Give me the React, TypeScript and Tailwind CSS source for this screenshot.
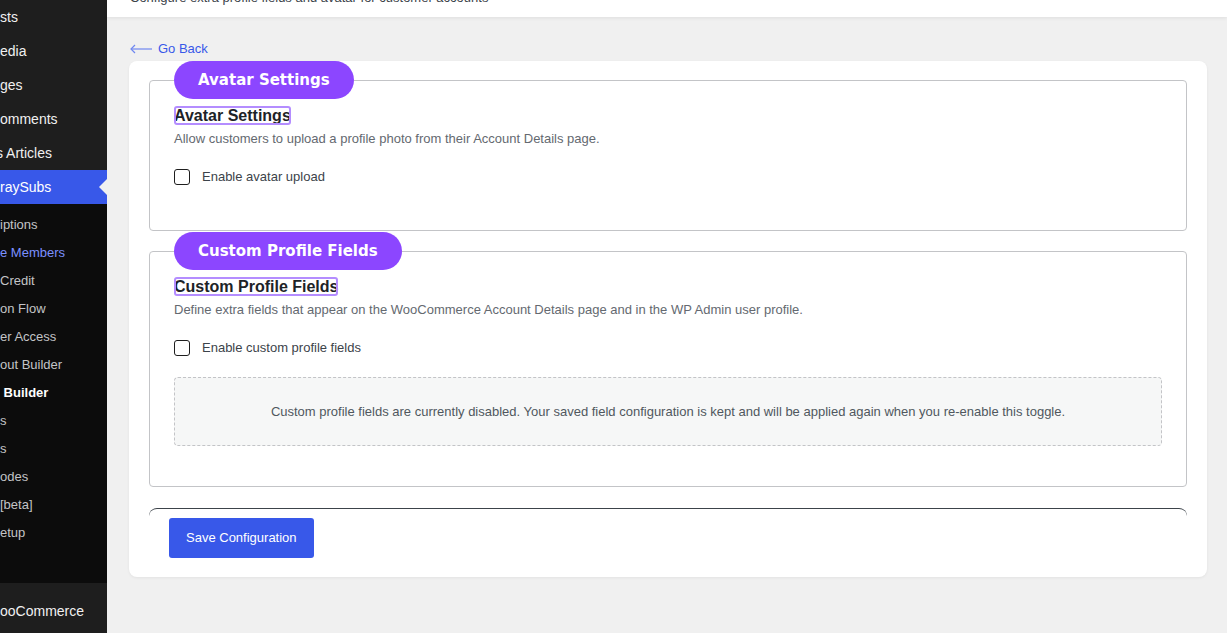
import React from 'react'

const topItems = [
  { label: 'sts' },
  { label: 'edia' },
  { label: 'ges' },
  { label: 'omments' },
  { label: 's Articles', cut: true },
  { label: 'raySubs', current: true },
]

const subItems = [
  { label: 'iptions' },
  { label: 'e Members', hover: true },
  { label: 'Credit' },
  { label: 'on Flow' },
  { label: 'er Access' },
  { label: 'out Builder' },
  { label: ' Builder', current: true },
  { label: 's' },
  { label: 's' },
  { label: 'odes' },
  { label: '[beta]' },
  { label: 'etup' },
]

function Sidebar() {
  return (
    <aside className="flex h-full w-[107px] shrink-0 flex-col overflow-hidden bg-[#1e1e1e] font-['Liberation_Sans',Arial,sans-serif]">
      {topItems.map((item) => (
        <div
          key={item.label}
          className={
            'relative flex h-[34px] items-center whitespace-pre text-[14px] ' +
            (item.current ? 'bg-[#3858e9] text-white' : 'text-[#f0f0f1]')
          }
        >
          <span className={item.cut ? '-ml-[4px]' : ''}>{item.label}</span>
          {item.current && (
            <span className="absolute right-0 top-[9px] h-0 w-0 border-y-[8px] border-r-[8px] border-y-transparent border-r-[#f0f0f0]" />
          )}
        </div>
      ))}
      <div className="flex h-[379px] flex-col bg-[#0c0c0c] pt-[7px]">
        {subItems.map((item, i) => (
          <div
            key={i}
            className={
              'flex h-[28px] items-center whitespace-pre text-[13px] ' +
              (item.current
                ? 'font-bold text-white'
                : item.hover
                  ? 'text-[#7b90ff]'
                  : 'text-[#c3c4c7]')
            }
          >
            {item.label}
          </div>
        ))}
      </div>
      <div className="pt-[11px]">
        <div className="flex h-[34px] items-center text-[14px] text-[#f0f0f1]">ooCommerce</div>
      </div>
    </aside>
  )
}

function Checkbox({ label }: { label: string }) {
  return (
    <label className="flex items-center gap-3 text-[13px] text-[#3c434a]">
      <input
        type="checkbox"
        className="h-4 w-4 appearance-none rounded-[3px] border-[1.5px] border-[#1e1e1e] bg-white"
      />
      <span className="leading-[16px]">{label}</span>
    </label>
  )
}

function Section({
  title,
  desc,
  toggle,
  children,
  className = '',
}: {
  title: string
  desc: string
  toggle: string
  children?: React.ReactNode
  className?: string
}) {
  return (
    <fieldset className={'m-0 min-w-0 rounded-[4px] border border-[#c3c4c7] px-6 pt-[4px] ' + className}>
      <legend className="mb-[3px] rounded-full bg-[#8c46ff] px-6 py-[10px] font-['DejaVu_Sans',Verdana,sans-serif] text-[15px] font-bold leading-[18px] text-white">
        {title}
      </legend>
      <h3 className="block w-fit rounded-[3px] text-[16px] font-bold leading-[19px] text-[#1d2327] outline-2 -outline-offset-2 outline-[#b48dff]">
        {title}
      </h3>
      <p className="mt-[5px] text-[13px] leading-[18px] text-[#646970]">{desc}</p>
      <div className="mt-[21px]">
        <Checkbox label={toggle} />
      </div>
      {children}
    </fieldset>
  )
}

export default function App() {
  return (
    <div className="flex h-[633px] w-[1227px] overflow-hidden bg-[#f0f0f0] font-['Liberation_Sans',Arial,sans-serif]">
      <Sidebar />
      <main className="flex min-w-0 flex-1 flex-col">
        <header className="relative z-10 h-[17px] overflow-hidden bg-white pl-[23px] shadow-[0_1px_4px_rgba(0,0,0,0.08)]">
          <p className="-mt-[11px] whitespace-nowrap text-[13px] leading-[18px] text-[#3c434a]">
            Configure extra profile fields and avatar for customer accounts
          </p>
        </header>

        <div className="pl-[22px] pr-[20px] pt-[23px]">
          <a href="#" className="flex items-center gap-[6px] pl-px text-[13px] leading-[18px] text-[#3858e9]">
            <svg width="22" height="10" viewBox="0 0 22 10" fill="none" stroke="#6f87f0" strokeWidth="1.2">
              <path d="M1 5H22" />
              <path d="M5 1L1 5L5 9" />
            </svg>
            Go Back
          </a>

          <div className="mt-[4px] rounded-lg bg-white px-5 pb-[19px] shadow-[0_1px_3px_rgba(0,0,0,0.06)]">
            <Section
              title="Avatar Settings"
              desc="Allow customers to upload a profile photo from their Account Details page."
              toggle="Enable avatar upload"
              className="-mt-px pb-[45px]"
            />
            <Section
              title="Custom Profile Fields"
              desc="Define extra fields that appear on the WooCommerce Account Details page and in the WP Admin user profile."
              toggle="Enable custom profile fields"
              className="mt-px pb-[40px]"
            >
              <div className="mt-[21px] rounded-[4px] border border-dashed border-[#c3c4c7] bg-[#f6f7f7] py-[25px] text-center text-[13px] leading-[17px] text-[#50575e]">
                Custom profile fields are currently disabled. Your saved field configuration is kept and will be applied again when you re-enable this toggle.
              </div>
            </Section>
            <div className="mt-[21px] rounded-t-lg border-t border-[#3c434a] px-5 pt-[9px]">
              <button className="h-[40px] rounded-[3px] bg-[#3858e9] px-[17px] text-[13px] text-white">
                Save Configuration
              </button>
            </div>
          </div>
        </div>
      </main>
    </div>
  )
}
